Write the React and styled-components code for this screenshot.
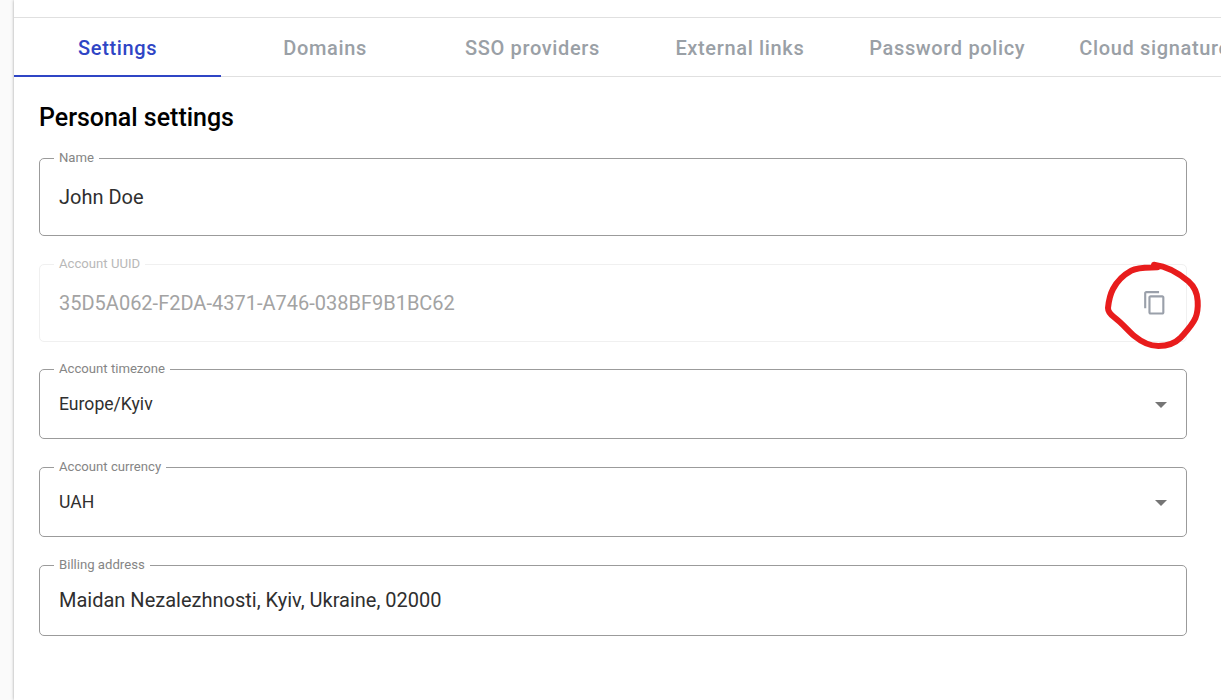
import React from 'react';
import styled, { createGlobalStyle } from 'styled-components';

const GlobalStyle = createGlobalStyle`
  *, *::before, *::after { box-sizing: border-box; }
  body {
    margin: 0;
    overflow: hidden;
    background: #fafafa;
    font-family: Roboto, "Liberation Sans", sans-serif;
  }
`;

const Page = styled.div`
  display: flex;
  height: 700px;
  padding-left: 14px;
  overflow: hidden;
`;

const Panel = styled.main`
  flex: 1;
  min-width: 0;
  background: #fff;
  box-shadow: 0 0 3px rgba(0, 0, 0, 0.35);
`;

const TabBar = styled.nav`
  display: flex;
  height: 60px;
  margin-top: 17px;
  border-top: 1px solid #e0e0e0;
  border-bottom: 1px solid #e0e0e0;
`;

const Tab = styled.button`
  flex: none;
  width: 207.4px;
  height: 59px;
  padding: 2px 0 0;
  border: 0;
  border-bottom: 2px solid ${(p) => (p.$active ? '#2f45c5' : 'transparent')};
  background: none;
  color: ${(p) => (p.$active ? '#2f45c5' : '#9aa0a6')};
  font: 500 20px/24px Roboto, sans-serif;
  letter-spacing: 0.65px;
  white-space: nowrap;
`;

const Content = styled.section`
  padding: 25px 34px 0 25px;
`;

const Heading = styled.h1`
  margin: 0 0 25px;
  color: #000;
  font-size: 25px;
  font-weight: 500;
  letter-spacing: -0.02px;
  line-height: 31px;
`;

const Field = styled.div`
  position: relative;
  display: flex;
  align-items: center;
  justify-content: space-between;
  height: ${(p) => p.$height}px;
  margin-bottom: ${(p) => p.$gap}px;
  padding: 0 19px;
  border: 1px solid ${(p) => (p.$disabled ? '#f0f0f0' : '#9b9b9b')};
  border-radius: 5px;
`;

const Label = styled.label`
  position: absolute;
  top: -9px;
  left: 14px;
  padding: 0 5px;
  background: #fff;
  color: ${(p) => (p.$disabled ? '#b8b8b8' : '#858585')};
  font-size: 13.15px;
  line-height: 16px;
`;

const Value = styled.span`
  padding-bottom: ${(p) => p.$lift || 0}px;
  color: ${(p) => (p.$disabled ? '#a3a3a3' : '#2f2f2f')};
  font-size: ${(p) => p.$size}px;
  line-height: 24px;
`;

const Caret = styled.span`
  margin-top: 2px;
  border: 6.5px solid transparent;
  border-top-color: #757575;
  border-bottom-width: 0;
`;

const CopyButton = styled.button`
  display: flex;
  padding: 0;
  border: 0;
  margin-right: -1px;
  background: none;
  color: #9aa0aa;
`;

const Annotation = styled.svg`
  position: absolute;
  top: -25px;
  right: -35px;
  pointer-events: none;
`;

const tabs = ['Settings', 'Domains', 'SSO providers', 'External links', 'Password policy', 'Cloud signature'];

const fields = [
  { label: 'Name', value: 'John Doe', height: 78, gap: 28, size: 20 },
  { label: 'Account UUID', value: '35D5A062-F2DA-4371-A746-038BF9B1BC62', height: 78, gap: 27, size: 20, copy: true },
  { label: 'Account timezone', value: 'Europe/Kyiv', height: 70, gap: 28, size: 17.6, select: true },
  { label: 'Account currency', value: 'UAH', height: 70, gap: 28, size: 17.6, select: true },
  { label: 'Billing address', value: 'Maidan Nezalezhnosti, Kyiv, Ukraine, 02000', height: 71, gap: 0, size: 20, lift: 2 },
];

function CopyControl() {
  return (
    <>
      <CopyButton aria-label="Copy account UUID">
        <svg width="25.6" height="25.6" viewBox="0 0 24 24" fill="currentColor">
          <path d="M16 1H4c-1.1 0-2 .9-2 2v14h2V3h12V1zm3 4H8c-1.1 0-2 .9-2 2v14c0 1.1.9 2 2 2h11c1.1 0 2-.9 2-2V7c0-1.1-.9-2-2-2zm0 16H8V7h11v14z" />
        </svg>
      </CopyButton>
      <Annotation width="141" height="120" viewBox="0 0 423 360" fill="none" stroke="#e81c1c" strokeWidth="18" strokeLinecap="round" strokeLinejoin="round">
        <path d="M232 82C204 83 176 80 154 92C132 104 110 126 99 147C89 166 86 184 84 204C84 216 92 224 103 232C127 250 143 271 163 288C186 307 209 318 235 318C264 318 288 307 303 292C318 275 336 257 346 235C353 218 354 199 353 183C352 159 341 138 325 124C301 103 262 79 222 74" />
      </Annotation>
    </>
  );
}

export default function App() {
  return (
    <Page>
      <GlobalStyle />
      <Panel>
        <TabBar>
          {tabs.map((name, i) => (
            <Tab key={name} $active={i === 0}>{name}</Tab>
          ))}
        </TabBar>
        <Content>
          <Heading>Personal settings</Heading>
          {fields.map((f) => (
            <Field key={f.label} $height={f.height} $gap={f.gap} $disabled={f.copy}>
              <Label $disabled={f.copy}>{f.label}</Label>
              <Value $size={f.size} $lift={f.lift} $disabled={f.copy}>{f.value}</Value>
              {f.select && <Caret />}
              {f.copy && <CopyControl />}
            </Field>
          ))}
        </Content>
      </Panel>
    </Page>
  );
}
